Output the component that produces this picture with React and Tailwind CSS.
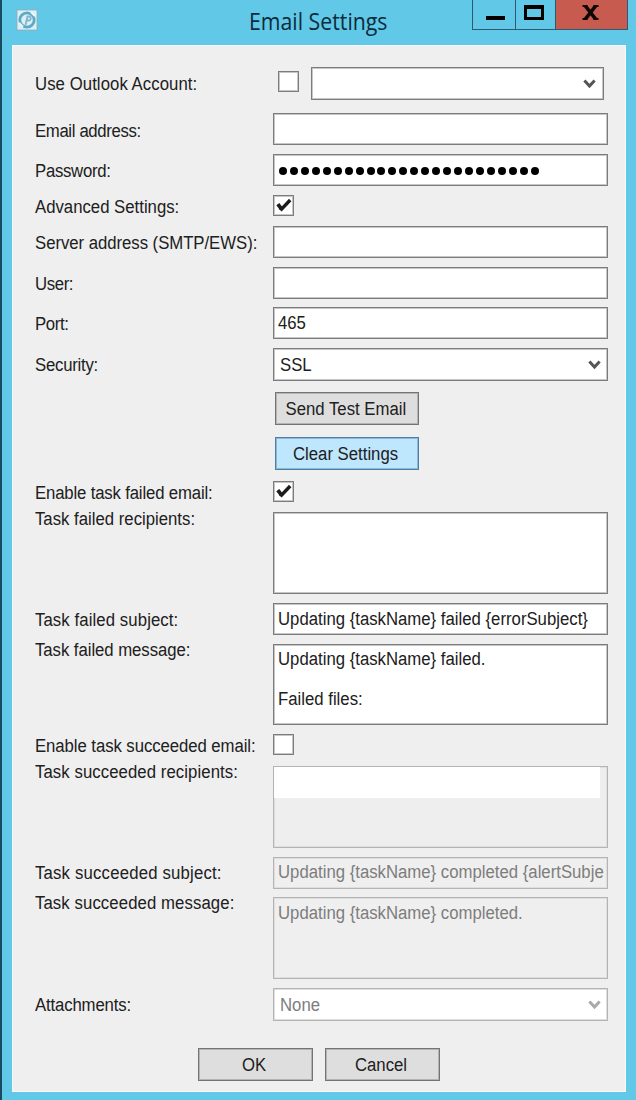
const labelText =
  "inline-block origin-left scale-x-[0.93] whitespace-pre font-[Liberation_Sans,Arial,sans-serif] text-[18px] leading-[20px]";

function Text({ children, className = "" }) {
  return <span className={`${labelText} ${className}`}>{children}</span>;
}

function Row({ label, height, offset = "pt-[5px]", tracking = "", children }) {
  return (
    <div className={`flex shrink-0 items-start ${height}`}>
      <div className={`w-[238px] shrink-0 ${offset}`}>
        <Text className={tracking}>{label}</Text>
      </div>
      {children}
    </div>
  );
}

const box = "border border-[#7c7c7c] shadow-[inset_0_0_0_1px_#c6c6c6]";
const boxOff = "border border-[#b4b4b4] shadow-[inset_0_0_0_1px_#dedede]";
const plainButton = "border border-[#747474] bg-[#dedede] shadow-[inset_0_0_0_1px_#b4b4b4]";

function Field({ size = "h-[32px]", pad = "pt-[3px]", off = false, children }) {
  return (
    <div
      className={`w-[335px] overflow-hidden whitespace-pre pl-[4px] ${pad} ${size} ${
        off ? `${boxOff} bg-[#efefef] text-[#7d7d7d]` : `${box} bg-white`
      }`}
    >
      {children}
    </div>
  );
}

function Select({ className = "w-[335px] pr-[6px]", off = false, value = "" }) {
  return (
    <div
      className={`flex h-[33px] items-center justify-between bg-white pl-[6px] ${className} ${
        off ? `${boxOff} text-[#7d7d7d]` : box
      }`}
    >
      <Text>{value}</Text>
      <svg
        className={`mt-px h-[10px] w-[13px] ${off ? "text-[#a9a9a9]" : "text-[#555555]"}`}
        viewBox="0 0 13 10"
        fill="none"
        stroke="currentColor"
        strokeWidth="3"
      >
        <path d="M1.4 1.4 L6.5 7 L11.6 1.4" />
      </svg>
    </div>
  );
}

function Checkbox({ checked = false, className = "" }) {
  return (
    <div className={`h-[21px] w-[21px] shrink-0 bg-white ${box} ${className}`}>
      {checked && (
        <svg viewBox="0 0 19 19" className="h-[19px] w-[19px]" fill="none" stroke="#1c1c1c">
          <path d="M3.8 8.2 L7.6 13.2" strokeWidth="3.8" />
          <path d="M6.4 14.4 L16.2 4" strokeWidth="3.4" />
        </svg>
      )}
    </div>
  );
}

function Button({ children, className }) {
  return (
    <button className={`flex h-[33px] items-center justify-center pr-[3px] ${className}`}>
      <span className="inline-block origin-center scale-x-[0.93] whitespace-pre font-[Liberation_Sans,Arial,sans-serif] text-[18px] leading-[20px]">
        {children}
      </span>
    </button>
  );
}

function TitleBar() {
  return (
    <div className="flex h-[45px] items-start">
      <svg className="ml-[14px] mt-[9px] h-[22px] w-[22px]" viewBox="0 0 22 22" fill="none">
        <rect x="0.75" y="0.75" width="20.5" height="20.5" fill="#d9f0f8" stroke="#7fb4c8" strokeWidth="1.3" />
        <circle cx="11" cy="11" r="7.2" stroke="#5fa9c4" strokeWidth="2.8" />
        <path d="M3 14 L7 18 M15 3 L19 7" stroke="#e8f7fb" strokeWidth="2.2" />
        <path d="M9.5 16 L11.5 7.5 H13 A2 2 0 0 1 12.5 11.5 H10.8" stroke="#7fb6cb" strokeWidth="1.8" />
      </svg>
      <div className="ml-[211px] w-[223px] pt-[7px]">
        <span className="inline-block origin-left scale-x-[0.925] whitespace-pre font-[Open_Sans,Noto_Sans,sans-serif] text-[23px] leading-[28px] text-[#0b2c3a]">
          Email Settings
        </span>
      </div>
      <div className="flex h-[30px] w-[156px] border border-t-0 border-[#2d5a70]">
        <div className="flex w-[43px] justify-center border-r border-[#2d5a70] pl-[2px] pt-[16px]">
          <div className="h-[4px] w-[19px] bg-black" />
        </div>
        <div className="flex w-[40px] justify-center border-r border-[#2d5a70] pr-[3px] pt-[5px]">
          <div className="h-[15px] w-[20px] border-[3px] border-t-4 border-black" />
        </div>
        <div className="flex flex-1 justify-center bg-[#c75b50] pr-[2px] pt-[5px]">
          <svg className="h-[15px] w-[17px]" viewBox="0 0 17 15" stroke="#0d0605" fill="none">
            <path d="M3 0.5 L14 14.5 M14 0.5 L3 14.5" strokeWidth="3.6" />
            <path d="M0.5 1 H5.5 M11.5 1 H16.5 M0.5 14 H5.5 M11.5 14 H16.5" strokeWidth="2" />
          </svg>
        </div>
      </div>
    </div>
  );
}

export default function App() {
  return (
    <div className="flex h-[1100px] w-[636px] flex-col overflow-hidden border-l-2 border-[#174b5f] bg-[#62c8e8] text-[#202020]">
      <TitleBar />
      <div className="ml-[10px] flex h-[1047px] w-[614px] flex-col border border-[#f8f8f8] bg-[#efefef] pl-[22px] pt-[21px]">
        <Row label="Use Outlook Account:" height="h-[46px]" tracking="tracking-[0.07px]">
          <Checkbox className="ml-[5px] mt-[4px]" />
          <Select className="ml-[12px] w-[293px] pr-[7px]" />
        </Row>
        <Row label="Email address:" height="h-[41px]" offset="pt-[6px]" tracking="tracking-[-0.38px]"><Field /></Row>
        <Row label="Password:" height="h-[41px]" tracking="tracking-[-0.3px]">
          <Field>
            <div className="flex gap-[2.95px] pl-px pt-[9px]">
              {Array.from({ length: 24 }, (_, i) => (
                <span key={i} className="h-[8px] w-[8px] shrink-0 rounded-full bg-black" />
              ))}
            </div>
          </Field>
        </Row>
        <Row label="Advanced Settings:" height="h-[31px]" offset="pt-0"><Checkbox checked /></Row>
        <Row label="Server address (SMTP/EWS):" height="h-[41px]" tracking="tracking-[-0.04px]"><Field /></Row>
        <Row label="User:" height="h-[40px]" tracking="tracking-[-0.4px]"><Field /></Row>
        <Row label="Port:" height="h-[41px]" tracking="tracking-[-0.4px]"><Field><Text>465</Text></Field></Row>
        <Row label="Security:" height="h-[44px]" tracking="tracking-[-0.25px]"><Select value="SSL" /></Row>
        <div className="flex h-[89px] flex-col gap-[12px] pl-[240px]">
          <Button className={`w-[144px] ${plainButton}`}>Send Test Email</Button>
          <Button className="w-[144px] border border-[#4a7fa6] bg-[#bee6fd] shadow-[inset_0_0_0_1px_#8fb8d4]">Clear Settings</Button>
        </div>
        <Row label="Enable task failed email:" height="h-[31px]" offset="pt-0" tracking="tracking-[-0.17px]"><Checkbox checked /></Row>
        <Row label="Task failed recipients:" height="h-[91px]" offset="-mt-[5px]"><Field size="h-[82px]" /></Row>
        <Row label="Task failed subject:" height="h-[41px]" tracking="tracking-[0.1px]"><Field><Text>{"Updating {taskName} failed {errorSubject}"}</Text></Field></Row>
        <Row label="Task failed message:" height="h-[90px]" offset="-mt-[6px]" tracking="tracking-[-0.05px]">
          <Field size="h-[81px]" pad="pt-[4px]"><Text className="leading-[20.5px]">{"Updating {taskName} failed.\n\nFailed files:"}</Text></Field>
        </Row>
        <Row label="Enable task succeeded email:" height="h-[32px]" offset="pt-0" tracking="tracking-[-0.07px]"><Checkbox /></Row>
        <Row label="Task succeeded recipients:" height="h-[91px]" offset="-mt-[6px]" tracking="tracking-[0.08px]">
          <div className={`h-[82px] w-[335px] bg-[#eeeeee] ${boxOff}`}><div className="h-[31px] w-[326px] bg-white" /></div>
        </Row>
        <Row label="Task succeeded subject:" height="h-[40px]" offset="pt-[4px]" tracking="tracking-[0.2px]"><Field off pad="pt-[2px]"><Text>{"Updating {taskName} completed {alertSubje"}</Text></Field></Row>
        <Row label="Task succeeded message:" height="h-[91px]" offset="-mt-[6px]" tracking="tracking-[0.1px]">
          <Field off size="h-[82px]"><Text>{"Updating {taskName} completed."}</Text></Field>
        </Row>
        <Row label="Attachments:" height="h-[60px]" tracking="tracking-[-0.15px]"><Select off value="None" /></Row>
        <div className="flex gap-[12px] pl-[163px]">
          <Button className={`w-[115px] ${plainButton}`}>OK</Button>
          <Button className={`w-[115px] ${plainButton}`}>Cancel</Button>
        </div>
      </div>
    </div>
  );
}
